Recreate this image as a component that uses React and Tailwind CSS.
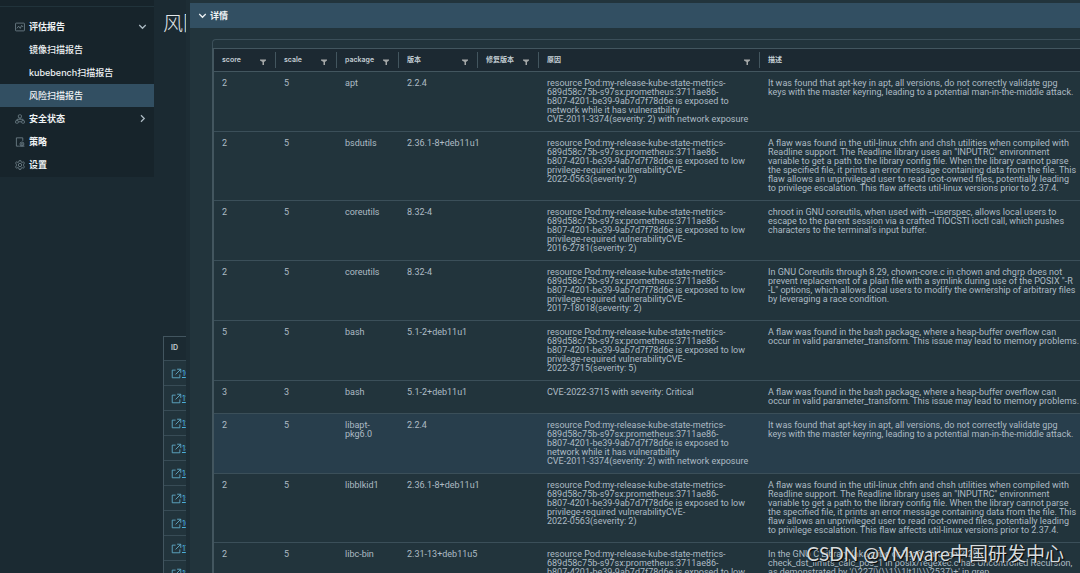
import React from "react";

const REASON_HEAD = "resource Pod:my-release-kube-state-metrics-\n689d58c75b-s97sx:prometheus:3711ae86-\n";
const APT_REASON = REASON_HEAD + "b807-4201-be39-9ab7d7f78d6e is exposed to\nnetwork while it has vulneratbility\nCVE-2011-3374(severity: 2) with network exposure";
const privileged = (tail) => REASON_HEAD + "b807-4201-be39-9ab7d7f78d6e is exposed to low\nprivilege-required vulnerabilityCVE-\n" + tail;
const APT_DESC = "It was found that apt-key in apt, all versions, do not correctly validate gpg\nkeys with the master keyring, leading to a potential man-in-the-middle attack.";
const UTIL_DESC = "A flaw was found in the util-linux chfn and chsh utilities when compiled with\nReadline support. The Readline library uses an \"INPUTRC\" environment\nvariable to get a path to the library config file. When the library cannot parse\nthe specified file, it prints an error message containing data from the file. This\nflaw allows an unprivileged user to read root-owned files, potentially leading\nto privilege escalation. This flaw affects util-linux versions prior to 2.37.4.";
const BASH_DESC = "A flaw was found in the bash package, where a heap-buffer overflow can\noccur in valid parameter_transform. This issue may lead to memory problems.";

const ROWS = [
  ["2", "5", "apt", "2.2.4", "", APT_REASON, APT_DESC],
  ["2", "5", "bsdutils", "2.36.1-8+deb11u1", "", privileged("2022-0563(severity: 2)"), UTIL_DESC],
  ["2", "5", "coreutils", "8.32-4", "", privileged("2016-2781(severity: 2)"), "chroot in GNU coreutils, when used with --userspec, allows local users to\nescape to the parent session via a crafted TIOCSTI ioctl call, which pushes\ncharacters to the terminal's input buffer."],
  ["2", "5", "coreutils", "8.32-4", "", privileged("2017-18018(severity: 2)"), "In GNU Coreutils through 8.29, chown-core.c in chown and chgrp does not\nprevent replacement of a plain file with a symlink during use of the POSIX \"-R\n-L\" options, which allows local users to modify the ownership of arbitrary files\nby leveraging a race condition."],
  ["5", "5", "bash", "5.1-2+deb11u1", "", privileged("2022-3715(severity: 5)"), BASH_DESC],
  ["3", "3", "bash", "5.1-2+deb11u1", "", "CVE-2022-3715 with severity: Critical", BASH_DESC],
  ["2", "5", "libapt-\npkg6.0", "2.2.4", "", APT_REASON, APT_DESC],
  ["2", "5", "libblkid1", "2.36.1-8+deb11u1", "", privileged("2022-0563(severity: 2)"), UTIL_DESC],
  ["2", "5", "libc-bin", "2.31-13+deb11u5", "", privileged("2010-4756(severity: 2)"), "In the GNU C Library (aka glibc or libc6) through 2.29,\ncheck_dst_limits_calc_pos_1 in posix/regexec.c has Uncontrolled Recursion,\nas demonstrated by '(\\227|)(\\\\1\\\\1|t1|\\\\\\2537)+' in grep."],
];
const SELECTED_ROW = 6;

const COLUMNS = [
  ["score", "w-[62px]"],
  ["scale", "w-[61px]"],
  ["package", "w-[62px]"],
  ["版本", "w-[79px]"],
  ["修复版本", "w-[61px]"],
  ["原因", "w-[221px]"],
  ["描述", ""],
];

function Icon({ className, children }) {
  return (
    <svg viewBox="0 0 36 36" className={className} fill="none" stroke="currentColor" strokeWidth="2.8" aria-hidden="true">
      {children}
    </svg>
  );
}

const Chevron = ({ className, right }) => (
  <Icon className={className}>
    <path d={right ? "M12 5 L25 18 L12 31" : "M5 12 L18 25 L31 12"} strokeWidth="5" />
  </Icon>
);

const ReportIcon = () => (
  <Icon className="h-[10px] w-[10px] shrink-0">
    <rect x="2" y="4" width="32" height="28" rx="2" />
    <path d="M7 23 L13 15 L19 23 L24 12 L29 18" />
  </Icon>
);
const StateIcon = () => (
  <Icon className="h-[10px] w-[10px] shrink-0">
    <rect x="12" y="3" width="11" height="11" rx="3" />
    <rect x="2" y="24" width="10" height="9" rx="2" />
    <rect x="24" y="24" width="10" height="9" rx="2" />
    <path d="M18 14 V19 M7 24 V19 H29 V24 M14 28 H22" />
  </Icon>
);
const PolicyIcon = () => (
  <Icon className="h-[10px] w-[10px] shrink-0">
    <path d="M14 33 H5 V3 H28 V14" />
    <circle cx="25" cy="25" r="7" />
    <circle cx="25" cy="25" r="2" />
    <path d="M15 33 H34" />
  </Icon>
);
const GearIcon = () => (
  <Icon className="h-[10px] w-[10px] shrink-0">
    <path d="M15 2 H21 L22 7 L26 9 L30 6 L34 11 L31 15 V21 L34 25 L30 30 L26 27 L22 29 L21 34 H15 L14 29 L10 27 L6 30 L2 25 L5 21 V15 L2 11 L6 6 L10 9 L14 7 Z" />
    <circle cx="18" cy="18" r="6" />
  </Icon>
);

function Group({ icon, label, chevron }) {
  return (
    <button type="button" className="flex h-[23px] w-full items-center gap-1 pr-[7px] pl-[15px] text-left font-bold">
      <span className="text-[#788a93]">{icon}</span>
      <span className="flex-1">{label}</span>
      {chevron && <Chevron right={chevron === "right"} className="h-[9px] w-[9px] text-[#adbbc4]" />}
    </button>
  );
}

function SubLink({ label, active }) {
  return (
    <a href="#" className={`flex h-[23px] items-center pl-[29px] font-medium ${active ? "bg-[#324f62]" : ""}`}>
      {label}
    </a>
  );
}

function Sidebar() {
  return (
    <nav className="w-[154px] shrink-0 self-start bg-[#17242b] pb-[1px] text-[9px] text-[#eef2f4]">
      <div className="mb-2 h-[7px] border-b border-[#21333b]" />
      <Group icon={<ReportIcon />} label="评估报告" chevron="down" />
      <SubLink label="镜像扫描报告" />
      <SubLink label="kubebench扫描报告" />
      <SubLink label="风险扫描报告" active />
      <Group icon={<StateIcon />} label="安全状态" chevron="right" />
      <Group icon={<PolicyIcon />} label="策略" />
      <Group icon={<GearIcon />} label="设置" />
    </nav>
  );
}

function ReportList() {
  return (
    <main className="flex w-[32px] shrink-0 flex-col overflow-hidden pl-[9px]">
      <h1 className="h-[336px] shrink-0 pt-[10px] text-[20px] leading-7 font-light whitespace-nowrap text-[#e3e8eb]">风险扫描报告</h1>
      <table className="w-[120px] table-fixed border-separate border-spacing-0 border-t border-l border-[#42555f] bg-[#22343c] text-[8px]">
        <thead>
          <tr>
            <th className="h-[24px] border-b border-[#384c56] bg-[#1b2a32] p-0 pl-[7px] text-left text-[7px] font-semibold text-[#c5d0d6]">ID</th>
          </tr>
        </thead>
        <tbody>
          {Array.from({ length: 9 }, (_, i) => (
            <tr key={i}>
              <td className="h-[25px] border-b border-[#384c56] p-0 pl-[7px]">
                <a href="#" className="flex items-center text-[#4aaed9]">
                  <Icon className="h-[11px] w-[11px] shrink-0 text-[#5fa9c6]">
                    <path d="M15 7 H4 V32 H29 V21 M20 4 H32 V16 M32 4 L15 21" strokeWidth="3" />
                  </Icon>
                  <span className="underline">1{i}</span>
                </a>
              </td>
            </tr>
          ))}
        </tbody>
      </table>
    </main>
  );
}

function DetailTable() {
  return (
    <table className="w-full table-fixed border-separate border-spacing-0 text-left">
      <thead>
        <tr className="bg-[#1c2932]">
          {COLUMNS.map(([name, width], i) => (
            <th key={name} className={`h-[23px] border-b border-[#43565f] p-0 text-[7px] font-semibold text-[#c3ced4] ${width}`}>
              <div className={`flex h-4 items-center justify-between pr-[9px] pl-2 ${i < 6 ? "border-r border-[#43565f]" : ""}`}>
                <span>{name}</span>
                {i < 6 && (
                  <button type="button" aria-label={`Filter ${name}`} className="pt-[3px] text-[#a5a8a8]">
                    <svg viewBox="0 0 12 12" className="h-[6px] w-[6px]" fill="currentColor" aria-hidden="true">
                      <path d="M0 1 H12 V3 L8 6 V12 H5 V6 L0 3 Z" />
                    </svg>
                  </button>
                )}
              </div>
            </th>
          ))}
        </tr>
      </thead>
      <tbody>
        {ROWS.map((row, r) => (
          <tr key={r} className={r === SELECTED_ROW ? "bg-[#283e4c]" : ""}>
            {row.map((cell, c) => (
              <td key={c} className="border-b border-[#3b4f59] pt-[7px] pr-0 pb-[7px] pl-2 align-top font-['Roboto','Noto_Sans_CJK_SC',sans-serif] text-[9px] leading-[9px] whitespace-pre text-[#adbbc4]">
                {cell}
              </td>
            ))}
          </tr>
        ))}
      </tbody>
    </table>
  );
}

export default function App() {
  return (
    <div className="relative flex h-screen overflow-hidden bg-[#1b2a32] font-['Inter','Noto_Sans_CJK_SC',sans-serif]">
      <Sidebar />
      <ReportList />
      <section className="flex min-w-0 flex-1 flex-col border-l-4 border-[#1d2d35] bg-[#22343c] pt-[3px]">
        <button type="button" className="flex h-[25px] shrink-0 items-center gap-[3px] bg-[#324f62] pl-2 text-[9px] font-bold text-[#eef2f4]">
          <Chevron className="h-[9px] w-[9px]" />
          详情
        </button>
        <div className="mt-[11px] ml-[22px] h-[9px] shrink-0 rounded-tl-sm border-t border-l border-[#3b4f59]" />
        <div className="ml-[22px] border-t border-l-2 border-[#43565f]">
          <DetailTable />
        </div>
      </section>
      <div className="absolute right-[16px] bottom-[5px] font-['Lato','Noto_Sans_CJK_SC',sans-serif] text-[19px] leading-7 whitespace-nowrap text-[#d8dcde] [text-shadow:1px_1px_1px_#000]">
        CSDN @VMware中国研发中心
      </div>
    </div>
  );
}
